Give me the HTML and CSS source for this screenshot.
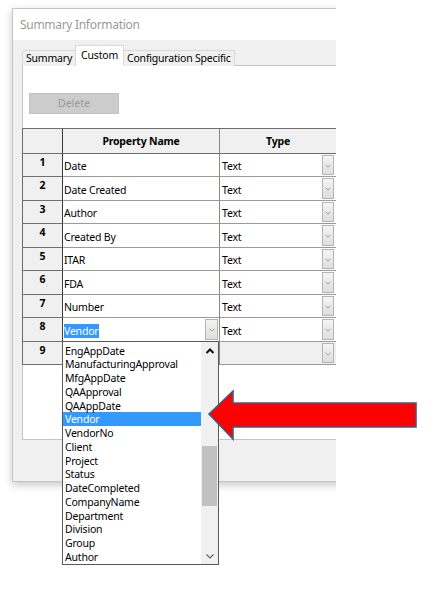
FILE: index.html
```html
<!DOCTYPE html>
<html>
<head>
<meta charset="utf-8">
<link rel="stylesheet" href="styles.css">
</head>
<body>
<div class="stage">
  <div class="clip">
    <div class="window">
      <div class="titlebar">Summary Information</div>
      <div class="wbody">
        <div class="tabs">
          <div class="tab">Summary</div>
          <div class="tab active">Custom</div>
          <div class="tab">Configuration Specific</div>
        </div>
        <div class="panel">
          <div class="delete">Delete</div>
          <div class="grid">
            <div class="hcell corner"></div>
            <div class="hcell">Property Name</div>
            <div class="hcell">Type</div>

            <div class="num">1</div><div class="prop">Date</div><div class="type">Text<span class="dd"><svg viewBox="0 0 12 8"><path d="M3 3l3 3 3-3"/></svg></span></div>
            <div class="num">2</div><div class="prop">Date Created</div><div class="type">Text<span class="dd"><svg viewBox="0 0 12 8"><path d="M3 3l3 3 3-3"/></svg></span></div>
            <div class="num">3</div><div class="prop">Author</div><div class="type">Text<span class="dd"><svg viewBox="0 0 12 8"><path d="M3 3l3 3 3-3"/></svg></span></div>
            <div class="num">4</div><div class="prop">Created By</div><div class="type">Text<span class="dd"><svg viewBox="0 0 12 8"><path d="M3 3l3 3 3-3"/></svg></span></div>
            <div class="num">5</div><div class="prop">ITAR</div><div class="type">Text<span class="dd"><svg viewBox="0 0 12 8"><path d="M3 3l3 3 3-3"/></svg></span></div>
            <div class="num">6</div><div class="prop">FDA</div><div class="type">Text<span class="dd"><svg viewBox="0 0 12 8"><path d="M3 3l3 3 3-3"/></svg></span></div>
            <div class="num">7</div><div class="prop">Number</div><div class="type">Text<span class="dd"><svg viewBox="0 0 12 8"><path d="M3 3l3 3 3-3"/></svg></span></div>
            <div class="num">8</div><div class="prop editing"><span class="sel">Vendor</span><span class="dd dd-prop"><svg viewBox="0 0 12 8"><path d="M3 3l3 3 3-3"/></svg></span></div><div class="type">Text<span class="dd"><svg viewBox="0 0 12 8"><path d="M3 3l3 3 3-3"/></svg></span></div>
            <div class="num">9</div><div class="prop"></div><div class="type empty"><span class="dd"><svg viewBox="0 0 12 8"><path d="M3 3l3 3 3-3"/></svg></span></div>
          </div>
        </div>
      </div>
    </div>
  </div>

  <div class="popup">
    <ul class="items">
      <li>EngAppDate</li>
      <li>ManufacturingApproval</li>
      <li>MfgAppDate</li>
      <li>QAApproval</li>
      <li>QAAppDate</li>
      <li class="hl">Vendor</li>
      <li>VendorNo</li>
      <li>Client</li>
      <li>Project</li>
      <li>Status</li>
      <li>DateCompleted</li>
      <li>CompanyName</li>
      <li>Department</li>
      <li>Division</li>
      <li>Group</li>
      <li>Author</li>
    </ul>
    <div class="scrollbar">
      <div class="sb-btn"><svg viewBox="0 0 16 16"><path class="up" d="M4.5 10l3.5-3.5 3.5 3.5"/></svg></div>
      <div class="sb-track"><div class="sb-thumb"></div></div>
      <div class="sb-btn"><svg viewBox="0 0 16 16"><path class="down" d="M4.5 6.5l3.5 3.5 3.5-3.5"/></svg></div>
    </div>
  </div>

  <svg class="arrow" width="215" height="58" viewBox="0 0 215 58">
    <polygon points="4,28 28,5 28,17 211,17 211,41 28,41 28,53" />
  </svg>
</div>
</body>
</html>
```

FILE: styles.css
```css
* { box-sizing: border-box; }
html, body { margin: 0; padding: 0; background: #ffffff; }
body { font-family: "Noto Sans", "Open Sans", sans-serif; color: #000; }

.stage { position: relative; width: 440px; height: 604px; }

.clip { width: 336px; overflow: hidden; padding-bottom: 14px; }

.window {
  margin: 8px 0 0 12px;
  width: 420px;
  border: 1px solid #c6c6c6;
  background: #f0f0f0;
  box-shadow: 0 3px 8px rgba(0,0,0,0.22);
}

.titlebar {
  height: 31px;
  background: #ffffff;
  padding-left: 7px;
  font-size: 12px;
  letter-spacing: -0.3px;
  line-height: 31px;
  color: #9b9b9b;
}

.wbody { padding: 6px 0 41px 9px; }

.tabs { display: flex; align-items: flex-end; height: 20px; margin-bottom: -1px; }
.tab {
  height: 16px;
  padding: 0 3px;
  border: 1px solid #d9d9d9;
  border-bottom: none;
  background: #f0f0f0;
  font-size: 10.5px;
  letter-spacing: -0.2px;
  line-height: 15px;
  margin-right: -1px;
}
.tab.active {
  position: relative;
  z-index: 1;
  height: 21px;
  background: #ffffff;
  padding: 0 5px;
  line-height: 18px;
}

.panel {
  height: 375px;
  background: #ffffff;
  border: 1px solid #c4c4c4;
  padding: 26px 0 0 6px;
}

.delete {
  width: 90px;
  height: 21px;
  background: #cccccc;
  border: 1px solid #c2c2c2;
  color: #9a9a9a;
  font-size: 10.5px;
  line-height: 19px;
  text-align: center;
  margin-top: 1px;
  margin-bottom: 14px;
}

.grid {
  margin-left: -7px;
  display: grid;
  grid-template-columns: 41px 157px 117px;
  grid-template-rows: 25px 23px 24px 23px 24px 23px 24px 23px 24px 23px;
  border-top: 1px solid #6e6e6e;
  font-size: 10.5px;
  letter-spacing: -0.2px;
}

.hcell {
  background: #f0f0f0;
  border-right: 1px solid #8a8a8a;
  border-bottom: 1px solid #6e6e6e;
  font-weight: bold;
  text-align: center;
  line-height: 24px;
}
.hcell.corner { border-left: 1px solid #6e6e6e; border-right-color: #3c3c3c; }

.num {
  background: #f0f0f0;
  border-left: 1px solid #6e6e6e;
  border-right: 1px solid #3c3c3c;
  border-bottom: 1px solid #707070;
  font-weight: bold;
  text-align: center;
  line-height: 14px;
  padding-top: 1px;
}

.prop, .type {
  position: relative;
  border-right: 1px solid #8a8a8a;
  border-bottom: 1px solid #9a9a9a;
  padding-left: 1px;
  display: flex;
  align-items: center;
  padding-top: 2px;
  white-space: nowrap;
}
.type { padding-left: 2px; }
.type.empty { background: #f0f0f0; }

.sel { background: #3399ff; color: #fff; padding-right: 1px; }

.dd {
  position: absolute;
  right: 2px;
  top: 1px;
  bottom: 1px;
  width: 12px;
  background: linear-gradient(#f4f4f4, #dedede);
  border: 1px solid #b4b4b4;
  display: flex;
  align-items: center;
  justify-content: center;
}
.dd svg { width: 10px; height: 7px; }
.dd path { fill: none; stroke: #8c8c8c; stroke-width: 1; }
.dd-prop { right: 1px; width: 13px; }

.popup {
  position: absolute;
  left: 62px;
  top: 341px;
  width: 157px;
  height: 224px;
  background: #ffffff;
  border: 1px solid #5a5a5a;
  display: flex;
}
.items {
  list-style: none;
  margin: 0;
  padding: 1.5px 0 0 0;
  flex: 1;
  font-size: 10.5px;
  letter-spacing: -0.2px;
}
.items li {
  height: 13.75px;
  line-height: 14px;
  padding-left: 2px;
  white-space: nowrap;
}
.items li.hl { background: #3399ff; color: #fff; }

.scrollbar {
  width: 17px;
  background: #f0f0f0;
  display: flex;
  flex-direction: column;
}
.sb-btn { height: 17px; display: flex; align-items: center; justify-content: center; }
.sb-btn svg { width: 16px; height: 16px; }
.sb-btn path { fill: none; }
.sb-btn path.up { stroke: #111; stroke-width: 2; }
.sb-btn path.down { stroke: #666; stroke-width: 1.2; }
.sb-track { flex: 1; padding: 87px 1px 0 1px; }
.sb-thumb { height: 60px; background: #c1c1c1; }

.arrow { position: absolute; left: 205px; top: 386px; }
.arrow polygon { fill: #ff0000; stroke: #3f5a89; stroke-width: 1.6; stroke-linejoin: miter; }
```
